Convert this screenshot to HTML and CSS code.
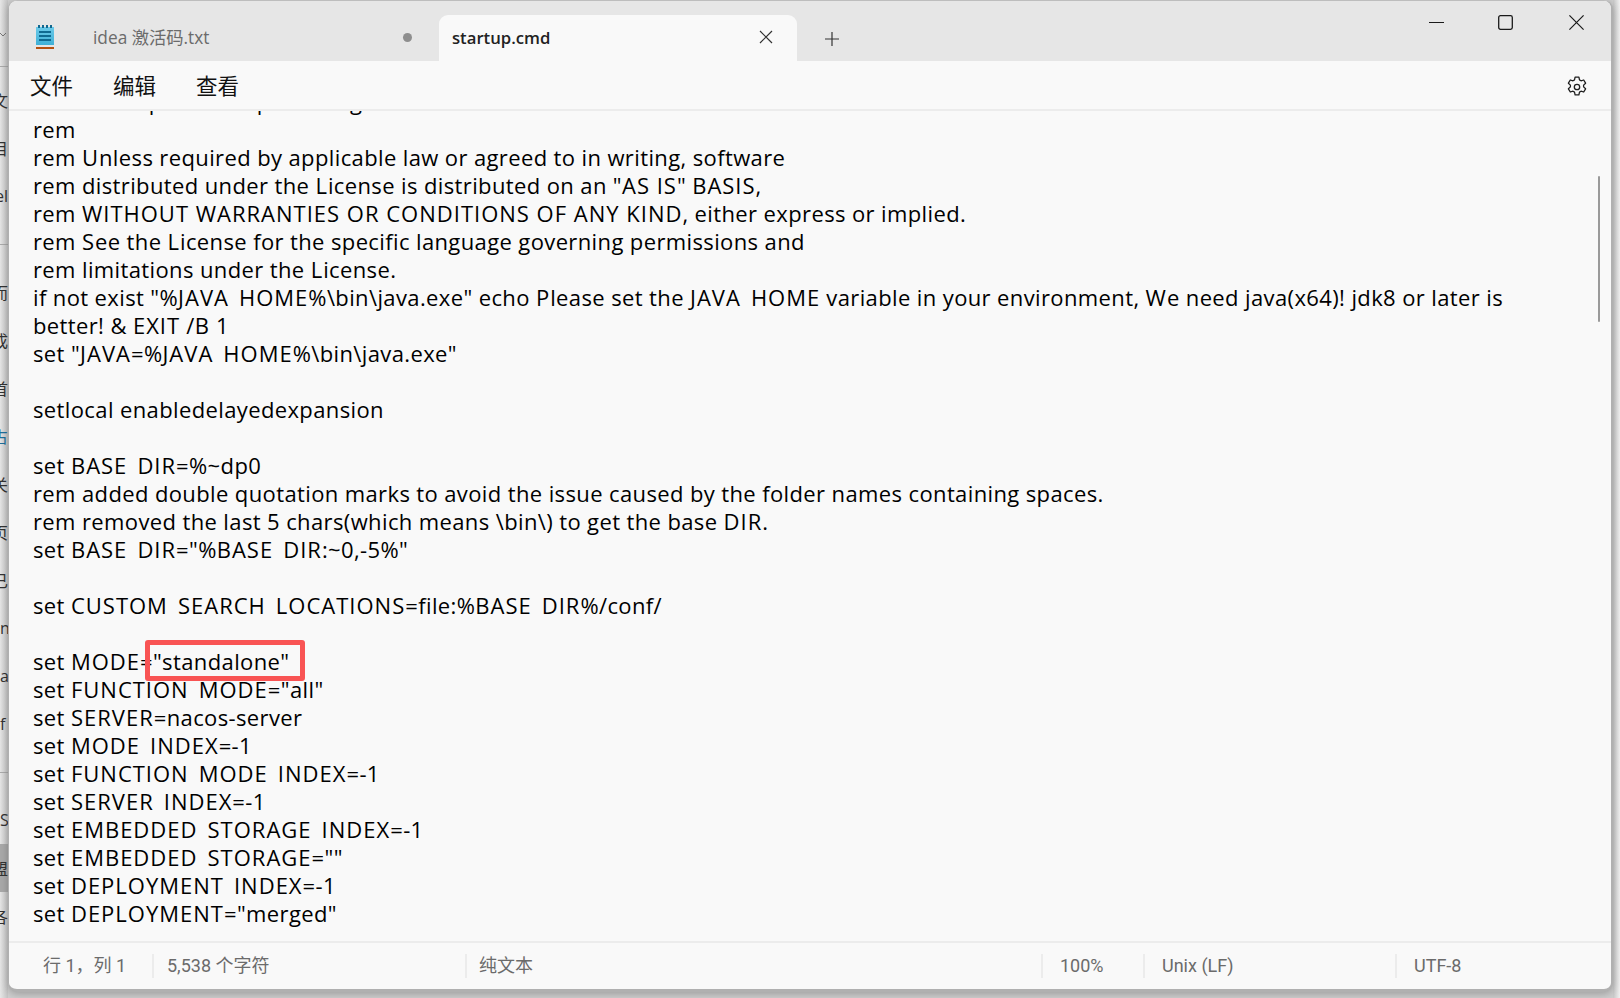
FILE: index.html
```html
<!DOCTYPE html>
<html lang="zh">
<head>
<meta charset="utf-8">
<title>startup.cmd</title>
<link rel="stylesheet" href="styles.css">
</head>
<body>
<div class="desktop">
  <aside class="behind">
    <svg class="chev" width="6" height="5" viewBox="0 0 6 5"><path d="M0 1l3 3 3-3" fill="none" stroke="#777" stroke-width="1"/></svg>
    <div class="rows">
      <div class="frag">文</div><div class="frag">目</div><div class="frag">el</div><div class="frag rule"></div>
      <div class="frag">而</div><div class="frag">成</div><div class="frag">首</div><div class="frag blue">占</div>
      <div class="frag">关</div><div class="frag">页</div><div class="frag">已</div><div class="frag start">n</div>
      <div class="frag start">a</div><div class="frag start">f</div><div class="frag rule"></div><div class="frag start">S</div>
      <div class="frag sel">盟</div><div class="frag">各</div>
    </div>
  </aside>
  <main class="window">
    <header class="titlebar">
      <div class="tab tab-idle">
        <svg class="app-icon" width="18" height="24" viewBox="0 0 18 24">
          <defs><linearGradient id="pad" x1="0" y1="0" x2="0" y2="1"><stop offset="0" stop-color="#6ccbea"/><stop offset="1" stop-color="#3fb0d6"/></linearGradient></defs>
          <rect x="0" y="2" width="18" height="18" fill="url(#pad)"/>
          <rect x="0" y="22" width="18" height="2" fill="#b5500f"/>
          <path d="M3 0v3M7 0v3M11 0v3M15 0v3" stroke="#12688f" stroke-width="2"/>
          <path d="M3 7h12M3 11h12M3 15h12" stroke="#0f6a91" stroke-width="2"/>
        </svg>
        <span class="tab-name">idea 激活码.txt</span>
        <span class="dot"></span>
      </div>
      <div class="tab tab-active">
        <span class="tab-name-active">startup.cmd</span>
        <svg class="tab-x" width="14" height="14" viewBox="0 0 14 14"><path d="M1 1l12 12M13 1L1 13" stroke="#333" stroke-width="1.200" fill="none"/></svg>
      </div>
      <svg class="plus" width="16" height="16" viewBox="0 0 16 16"><path d="M8 1v14M1 8h14" stroke="#333" stroke-width="1.200" fill="none"/></svg>
      <div class="controls">
        <svg width="15" height="15" viewBox="0 0 15 15"><path d="M0 7.500h15" stroke="#1a1a1a" stroke-width="1.100"/></svg>
        <svg class="max" width="15" height="15" viewBox="0 0 15 15"><rect x=".7" y=".7" width="13.600" height="13.600" rx="1.800" fill="none" stroke="#1a1a1a" stroke-width="1.300"/></svg>
        <svg width="15" height="15" viewBox="0 0 15 15"><path d="M.4.4l14.200 14.200M14.600.4L.4 14.600" stroke="#1a1a1a" stroke-width="1.200" fill="none"/></svg>
      </div>
    </header>
    <nav class="menubar">
      <span class="menu">文件</span><span class="menu">编辑</span><span class="menu">查看</span>
      <svg class="gear" width="22" height="22" viewBox="0 0 22 22" fill="none" stroke="#1f1f1f" stroke-width="1.300" stroke-linejoin="round">
        <circle cx="11" cy="11" r="2.700"/>
        <path d="M9.100 1.200h3.800l.6 2.700 1.500.9 2.700-.8 1.900 3.200-2 1.900v1.800l2 1.900-1.900 3.200-2.700-.8-1.500.9-.6 2.700H9.100l-.6-2.700-1.500-.9-2.700.8-1.900-3.200 2-1.900V9.100l-2-1.900 1.900-3.200 2.700.8 1.500-.9z"/>
      </svg>
    </nav>
    <section class="editor">
      <div class="scrollbar"></div>
      <div class="text">
        <div class="ln">rem       http://www.apache.org/licenses/<span class="u">LICENSE</span>-2.0</div>
        <div class="ln">rem</div>
        <div class="ln">rem <span class="u">U</span>nless required by applicable law or agreed to in writing, software</div>
        <div class="ln">rem distributed under the <span class="u">L</span>icense is distributed on an "<span class="u">AS IS</span>" <span class="u">BASIS</span>,</div>
        <div class="ln">rem <span class="u">WITHOUT WARRANTIES OR CONDITIONS OF ANY KIND</span>, either express or implied.</div>
        <div class="ln">rem <span class="u">S</span>ee the <span class="u">L</span>icense for the specific language governing permissions and</div>
        <div class="ln">rem limitations under the <span class="u">L</span>icense.</div>
        <div class="ln">if not exist "%<span class="u">JAVA</span><span class="us">_</span><span class="u">HOME</span>%\bin\java.exe" echo <span class="u">P</span>lease set the <span class="u">JAVA</span><span class="us">_</span><span class="u">HOME</span> variable in your environment, <span class="u">W</span>e need java(x64)! jdk8 or later is</div>
        <div class="ln">better! &amp; <span class="u">EXIT</span> /<span class="u">B</span> 1</div>
        <div class="ln">set "<span class="u">JAVA</span>=%<span class="u">JAVA</span><span class="us">_</span><span class="u">HOME</span>%\bin\java.exe"</div>
        <div class="ln"></div>
        <div class="ln">setlocal enabledelayedexpansion</div>
        <div class="ln"></div>
        <div class="ln">set <span class="u">BASE</span><span class="us">_</span><span class="u">DIR</span>=%~dp0</div>
        <div class="ln">rem added double quotation marks to avoid the issue caused by the folder names containing spaces.</div>
        <div class="ln">rem removed the last 5 chars(which means \bin\) to get the base <span class="u">DIR</span>.</div>
        <div class="ln">set <span class="u">BASE</span><span class="us">_</span><span class="u">DIR</span>="%<span class="u">BASE</span><span class="us">_</span><span class="u">DIR</span>:~0,-5%"</div>
        <div class="ln"></div>
        <div class="ln">set <span class="u">CUSTOM</span><span class="us">_</span><span class="u">SEARCH</span><span class="us">_</span><span class="u">LOCATIONS</span>=file:%<span class="u">BASE</span><span class="us">_</span><span class="u">DIR</span>%/conf/</div>
        <div class="ln"></div>
        <div class="ln">set <span class="u">MODE</span>="standalone"</div>
        <div class="ln">set <span class="u">FUNCTION</span><span class="us">_</span><span class="u">MODE</span>="all"</div>
        <div class="ln">set <span class="u">SERVER</span>=nacos-server</div>
        <div class="ln">set <span class="u">MODE</span><span class="us">_</span><span class="u">INDEX</span>=-1</div>
        <div class="ln">set <span class="u">FUNCTION</span><span class="us">_</span><span class="u">MODE</span><span class="us">_</span><span class="u">INDEX</span>=-1</div>
        <div class="ln">set <span class="u">SERVER</span><span class="us">_</span><span class="u">INDEX</span>=-1</div>
        <div class="ln">set <span class="u">EMBEDDED</span><span class="us">_</span><span class="u">STORAGE</span><span class="us">_</span><span class="u">INDEX</span>=-1</div>
        <div class="ln">set <span class="u">EMBEDDED</span><span class="us">_</span><span class="u">STORAGE</span>=""</div>
        <div class="ln">set <span class="u">DEPLOYMENT</span><span class="us">_</span><span class="u">INDEX</span>=-1</div>
        <div class="ln">set <span class="u">DEPLOYMENT</span>="merged"</div>
      </div>
      <div class="callout"></div>
    </section>
    <footer class="statusbar">
      <span class="cell c-pos">行 1，列 1</span>
      <span class="cell c-count">5,538 个字符</span>
      <span class="cell c-type">纯文本</span>
      <span class="cell c-zoom">100%</span>
      <span class="cell c-eol">Unix (LF)</span>
      <span class="cell c-enc">UTF-8</span>
    </footer>
  </main>
  <div class="edge"></div>
</div>
</body>
</html>
```
FILE: styles.css
```css
* { box-sizing: border-box; }
html, body { margin: 0; padding: 0; }
body { width: 1620px; height: 998px; overflow: hidden; background: #e4e4e4; font-family: "Open Sans", "Noto Sans CJK SC", sans-serif; color: #000; }
.desktop { display: flex; width: 1620px; height: 998px; background: #cfcfcf; }

.behind { position: relative; flex: 0 0 8px; width: 8px; height: 998px; overflow: hidden; background: linear-gradient(90deg, #e6e6e6, #c4c4c4); }
.behind::before { content: ""; position: absolute; left: 0; right: 0; top: 66px; height: 1px; background: #aaa; }
.chev { position: absolute; left: 0; top: 32px; }
.rows { display: flex; flex-direction: column; padding-top: 76px; }
.frag { height: 48px; display: flex; align-items: center; justify-content: flex-end; font-size: 16px; color: #333; white-space: nowrap; }
.frag.start { justify-content: flex-start; }
.frag.blue { color: #1f6f9c; }
.frag.sel { background: #a9a9a9; }
.frag.rule::before { content: ""; flex: 1 1 auto; height: 1px; background: #aaa; }

.window { flex: 0 0 1605px; height: 992px; display: flex; flex-direction: column; background: #f9f9f9; border: 2px solid #b0b0b0; border-top: 1px solid #bdbdbd; border-left-width: 1px; border-bottom-width: 3px; border-radius: 9px; overflow: hidden; position: relative; box-shadow: 0 2px 8px rgba(0,0,0,.25); }

.titlebar { flex: 0 0 60px; display: flex; align-items: flex-end; background: #e6e6e6; position: relative; }
.tab { height: 46px; display: flex; align-items: center; }
.tab-idle { width: 430px; position: relative; }
.app-icon { position: absolute; left: 27px; top: 10px; }
.tab-name { margin-left: 84px; margin-bottom: 4px; font-size: 17.300px; color: #6b6b6b; }
.dot { position: absolute; left: 394px; top: 18px; width: 9px; height: 9px; border-radius: 50%; background: #8e8e8e; }
.tab-active { width: 358px; background: #f9f9f9; border-radius: 9px 9px 0 0; padding: 0 24px 0 13px; justify-content: space-between; }
.tab-name-active { font-size: 16.700px; font-weight: 600; color: #222; margin-bottom: 2px; }
.tab-x { margin-bottom: 2px; }
.plus { margin: 0 0 14px 27px; }
.controls { position: absolute; right: 27px; top: 14px; display: flex; gap: 54px; }
.max { margin-right: 2px; }

.menubar { flex: 0 0 50px; display: flex; align-items: center; padding: 0 0 2px 21px; gap: 40px; border-bottom: 2px solid #ececec; position: relative; }
.menu { font-size: 21.500px; color: #111; }
.gear { position: absolute; right: 23px; top: 15px; }

.editor { flex: 1 1 auto; position: relative; overflow: hidden; background: #f9f9f9; }
.scrollbar { position: absolute; right: 11px; top: 65px; width: 2px; height: 146px; background: #9a9a9a; border-radius: 1px; }
.text { margin-top: -24px; padding-left: 24px; }
.ln { height: 28px; line-height: 28px; font-size: 22px; letter-spacing: .38px; white-space: pre; }
.u { letter-spacing: 1px; }
.us { color: transparent; }
.callout { position: absolute; left: 136px; top: 529px; width: 160px; height: 41px; border: 5px solid #f95454; border-radius: 3px; }

.statusbar { flex: 0 0 48px; position: relative; display: flex; border-top: 2px solid #ececec; padding-bottom: 1px; font-family: Roboto, "Noto Sans CJK SC", sans-serif; font-size: 18px; color: #6b6b6b; align-items: center; }
.cell { height: 24px; line-height: 24px; border-right: 2px solid #ececec; padding-left: 13px; white-space: nowrap; }
.c-pos { width: 145px; padding-left: 34px; }
.c-count { width: 313px; }
.c-type { width: 576px; padding-left: 12px; }
.c-zoom { width: 102px; padding-left: 17px; }
.c-eol { width: 252px; padding-left: 17px; }
.c-enc { border-right: 0; padding-left: 17px; }

.edge { flex: 1 1 auto; height: 998px; background: linear-gradient(90deg, #c8c8c8, #f0f0f0); }
```
